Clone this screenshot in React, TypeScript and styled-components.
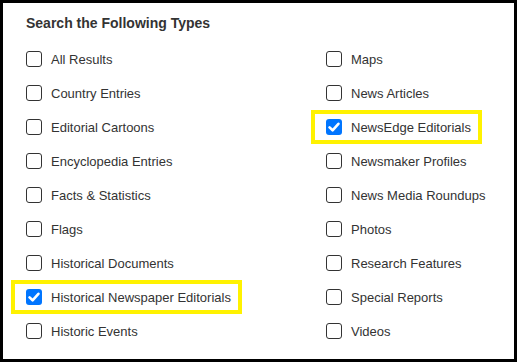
import styled, { createGlobalStyle } from "styled-components";

const GlobalStyle = createGlobalStyle`
	html, body {
		margin: 0;
		padding: 0;
		background: #fff;
	}
	* {
		box-sizing: border-box;
	}
`;

const StyledPanel = styled.section`
	width: 517px;
	height: 362px;
	border: 3px solid #000;
	padding: 11px 0 0 23px;
	font-family: "Liberation Sans", Arial, sans-serif;
	color: #333;
	background: #fff;
`;

const StyledTitle = styled.h2`
	margin: 0;
	font-size: 14px;
	line-height: 18px;
	font-weight: bold;
	color: #333;
`;

const StyledGrid = styled.div`
	display: grid;
	grid-template-columns: 300px 1fr;
	grid-auto-flow: column;
	grid-template-rows: repeat(9, 34px);
	margin-top: 10px;
`;

const StyledItem = styled.label<{ $highlight?: boolean }>`
	position: relative;
	justify-self: start;
	display: inline-flex;
	align-items: center;
	gap: 9px;
	height: 34px;
	font-size: 13px;
	color: #333;
	cursor: pointer;

	${(p) =>
		p.$highlight &&
		`
		::after {
			content: "";
			position: absolute;
			left: -15px;
			right: -11px;
			top: 0;
			bottom: 0;
			border: 4px solid #fff200;
			pointer-events: none;
		}
	`}
`;

const StyledBox = styled.span<{ $checked?: boolean }>`
	flex: none;
	display: flex;
	align-items: center;
	justify-content: center;
	width: 16px;
	height: 16px;
	border-radius: 3px;
	border: ${(p) => (p.$checked ? "none" : "1.5px solid #333")};
	background: ${(p) => (p.$checked ? "#0075ff" : "#fff")};
`;

function Check() {
	return (
		<svg width="12" height="12" viewBox="0 0 12 12">
			<path
				d="M1.6 6.4 L4.6 9.3 L10.4 2.8"
				fill="none"
				stroke="#fff"
				strokeWidth="2.6"
				strokeLinecap="round"
				strokeLinejoin="round"
			/>
		</svg>
	);
}

const types = [
	{ name: "All Results" },
	{ name: "Country Entries" },
	{ name: "Editorial Cartoons" },
	{ name: "Encyclopedia Entries" },
	{ name: "Facts & Statistics" },
	{ name: "Flags" },
	{ name: "Historical Documents" },
	{ name: "Historical Newspaper Editorials", checked: true },
	{ name: "Historic Events" },
	{ name: "Maps" },
	{ name: "News Articles" },
	{ name: "NewsEdge Editorials", checked: true },
	{ name: "Newsmaker Profiles" },
	{ name: "News Media Roundups" },
	{ name: "Photos" },
	{ name: "Research Features" },
	{ name: "Special Reports" },
	{ name: "Videos" },
];

export default function App() {
	return (
		<>
			<GlobalStyle />
			<StyledPanel>
				<StyledTitle>Search the Following Types</StyledTitle>
				<StyledGrid>
					{types.map((t) => (
						<StyledItem key={t.name} $highlight={t.checked}>
							<StyledBox $checked={t.checked}>{t.checked && <Check />}</StyledBox>
							<span>{t.name}</span>
						</StyledItem>
					))}
				</StyledGrid>
			</StyledPanel>
		</>
	);
}
